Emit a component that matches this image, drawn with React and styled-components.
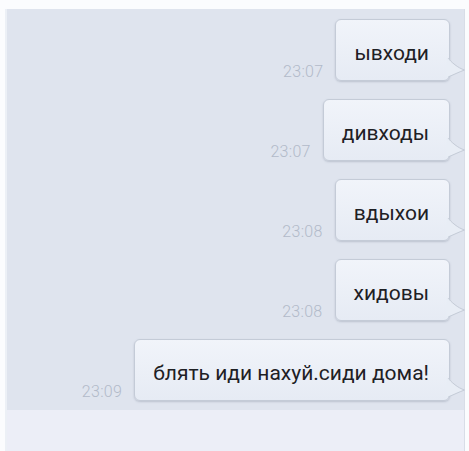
import React from "react";
import styled, { createGlobalStyle } from "styled-components";

const Global = createGlobalStyle`
  html, body { margin: 0; padding: 0; background: #fbfcfe; }
  body { font-family: Roboto, "Noto Sans", "DejaVu Sans", sans-serif; }
`;

const Screen = styled.div`
  width: 460px;
  margin: 9px 0 0 5px;
  display: flex;
  flex-direction: column;
  border-left: 2px solid #ecf0f6;
  border-right: 1px solid #d8dde7;
  box-sizing: border-box;
`;

const Chat = styled.div`
  height: 401px;
  background: #dfe4ee;
  box-sizing: border-box;
  padding: 10px 14px 0 0;
  display: flex;
  flex-direction: column;
  gap: 18px;
`;

const Footer = styled.div`
  height: 41px;
  background: #eceef7;
`;

const Row = styled.div`
  display: flex;
  justify-content: flex-end;
  align-items: flex-end;
  gap: 12px;
`;

const Time = styled.span`
  font-size: 16px;
  font-weight: 300;
  color: #b2bac9;
  margin-bottom: 0;
  letter-spacing: 0.3px;
`;

const Bubble = styled.div`
  position: relative;
  height: 62px;
  box-sizing: border-box;
  padding: 21px 20px 0 18px;
  border: 1px solid #c4cbd7;
  border-radius: 6px;
  background: linear-gradient(#f1f4fa, #e6ebf4);
  box-shadow: 0 1px 2px rgba(120, 130, 150, 0.35);
  font-size: 21px;
  color: #1e2024;
  white-space: nowrap;
`;

const Tail = styled.svg`
  position: absolute;
  right: -17px;
  bottom: 1px;
  width: 18px;
  height: 22px;
  overflow: visible;
`;

const messages = [
  { text: "ывходи", time: "23:07" },
  { text: "дивходы", time: "23:07" },
  { text: "вдыхои", time: "23:08" },
  { text: "хидовы", time: "23:08" },
  { text: "блять иди нахуй.сиди дома!", time: "23:09" },
];

export default function App() {
  return (
    <>
      <Global />
      <Screen>
        <Chat>
          {messages.map((m, i) => (
            <Row key={i}>
              <Time>{m.time}</Time>
              <Bubble>
                {m.text}
                <Tail viewBox="0 0 18 22">
                  <path
                    d="M0 1 C3 5 10 11 16.5 13 C11 15 5 18 0 20"
                    fill="#e8edf5"
                    stroke="#c4cbd7"
                    strokeWidth="1"
                  />
                  <rect x="-1.5" y="1.5" width="2" height="18" fill="#e8edf5" />
                </Tail>
              </Bubble>
            </Row>
          ))}
        </Chat>
        <Footer />
      </Screen>
    </>
  );
}
